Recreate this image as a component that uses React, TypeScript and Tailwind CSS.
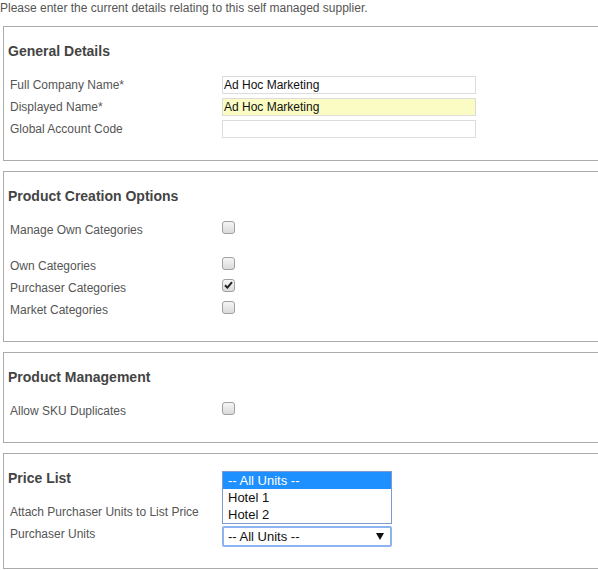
import { useState } from 'react';

// Simple form sections for a self managed supplier
type CheckRow = { label: string; checked: boolean };

function Checkbox({ checked }: { checked: boolean }) {
    return (
        <span className="mb-[6px] flex h-[13px] w-[13px] items-center justify-center rounded-[3px] border border-[#a0a0a0] bg-gradient-to-b from-[#f6f6f6] to-[#dadada]">
            {checked && (
                <svg width="9" height="8" viewBox="0 0 9 8">
                    <path d="M1 4.2 L3.4 6.6 L8 1.2" fill="none" stroke="#222" strokeWidth="2" />
                </svg>
            )}
        </span>
    );
}

function Section({ title, children, last }: { title: string; children: React.ReactNode; last?: boolean }) {
    return (
        <section className={`ml-[3px] w-[620px] border border-[#ababab] pl-[4px] pt-[16px] ${last ? 'pb-[23px]' : 'mb-[10px] pb-[20px]'}`}>
            <h2 className="mb-[15px] h-[16px] text-[14px] font-bold leading-[16px] text-[#444]">{title}</h2>
            {children}
        </section>
    );
}

function Row({ label, children }: { label: string; children?: React.ReactNode }) {
    return (
        <div className="flex h-[22px] items-center">
            <span className="w-[214px] pl-[2px] text-[12px] text-[#555]">{label}</span>
            {children}
        </div>
    );
}

export default function App() {
    const [units] = useState(['-- All Units --', 'Hotel 1', 'Hotel 2']);

    const categories: CheckRow[] = [
        { label: 'Own Categories', checked: false },
        { label: 'Purchaser Categories', checked: true },
        { label: 'Market Categories', checked: false },
    ];

    return (
        <div className="h-[570px] w-[598px] overflow-hidden bg-white font-['Liberation_Sans',Arial,sans-serif]">
            <p className="h-[26px] pt-[1px] text-[12px] leading-[14px] text-[#555]">
                Please enter the current details relating to this self managed supplier.
            </p>

            <Section title="General Details">
                <Row label="Full Company Name*">
                    <div className="flex h-[18px] w-[254px] items-center border border-[#dcdcdc] bg-white px-[1px] text-[12px] text-[#111]">
                        Ad Hoc Marketing
                    </div>
                </Row>
                <Row label="Displayed Name*">
                    <div className="flex h-[18px] w-[254px] items-center border border-[#dcdcdc] bg-[#fbfcc3] px-[1px] text-[12px] text-[#111]">
                        Ad Hoc Marketing
                    </div>
                </Row>
                <Row label="Global Account Code">
                    <div className="h-[18px] w-[254px] border border-[#dcdcdc] bg-white" />
                </Row>
            </Section>

            <Section title="Product Creation Options">
                <Row label="Manage Own Categories">
                    <Checkbox checked={false} />
                </Row>
                <div className="mt-[14px]">
                    {categories.map((c) => (
                        <Row key={c.label} label={c.label}>
                            <Checkbox checked={c.checked} />
                        </Row>
                    ))}
                </div>
            </Section>

            <Section title="Product Management">
                <Row label="Allow SKU Duplicates">
                    <Checkbox checked={false} />
                </Row>
            </Section>

            <Section title="Price List" last>
                <Row label="Attach Purchaser Units to List Price" />
                <div className="flex h-[22px]">
                    <span className="flex h-[22px] w-[214px] items-center pl-[2px] text-[12px] text-[#555]">Purchaser Units</span>
                    <div className="relative mt-[3px]">
                        {/* open dropdown list */}
                        <ul className="absolute bottom-[21px] left-0 w-[170px] border border-[#7e9bcf] bg-white text-[13px] leading-[17px] text-[#111]">
                            {units.map((u, i) => (
                                <li key={u} className={`h-[17px] pl-[5px] ${i === 0 ? 'bg-[#1e90ff] text-white' : ''}`}>
                                    {u}
                                </li>
                            ))}
                        </ul>
                        <div className="flex h-[21px] w-[170px] items-center justify-between rounded-[2px] border-2 border-[#8fb3f0] bg-white pl-[4px] pr-[6px] text-[13px] text-[#111]">
                            <span>-- All Units --</span>
                            <svg width="8" height="7" viewBox="0 0 8 7">
                                <path d="M0 0 H8 L4 7 Z" fill="#111" />
                            </svg>
                        </div>
                    </div>
                </div>
            </Section>
        </div>
    );
}
